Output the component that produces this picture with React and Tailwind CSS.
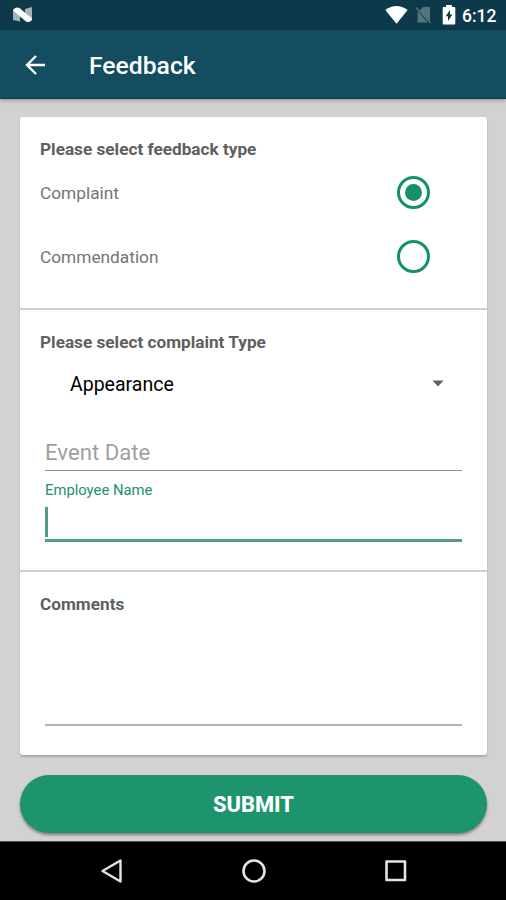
function StatusBar() {
  return (
    <div className="flex h-[30px] shrink-0 items-center bg-[#0d3a4a] pl-[13px] pr-[9px]">
      <svg width="20" height="16" viewBox="0 0 20 16">
        <path d="M0 2 7 6v8.500L0 13Z" fill="#a3b3b9" />
        <path d="M12 2 19 0v14l-7-4Z" fill="#a3b3b9" />
        <path d="M0 3.500Q2-.5 6.500 1L19 11.500Q17.500 16.500 13 14.500L0 3.500Z" fill="#fff" />
      </svg>
      <div className="ml-auto flex items-center">
        <svg width="23" height="18" viewBox="0 0 23 18">
          <path d="M.3 4Q11.500-3.800 22.700 4L11.500 17.800Z" fill="#fff" />
        </svg>
        <svg className="ml-[7px]" width="17" height="18" viewBox="0 0 17 18">
          <path d="M15 1v14.500L4.500 4.500 8 1ZM2.500 5v11.500H13Z" fill="#557681" />
          <path d="M.8 1.500 15.800 17" stroke="#557681" strokeWidth="1.400" />
        </svg>
        <svg className="ml-[10px]" width="14" height="20" viewBox="0 0 14 20">
          <path d="M4 0h6v2h2.300q1 0 1 1v15.500q0 1-1 1H1.700q-1 0-1-1V3q0-1 1-1H4Z" fill="#fff" />
          <path d="M8 5v4.500h2.500L6 16v-4.800H3.700Z" fill="#0d3a4a" />
        </svg>
        <span className="ml-1.5 w-[35px] whitespace-nowrap pt-[3px] text-[17.500px] font-medium leading-none text-white">6:12</span>
      </div>
    </div>
  );
}

function Radio({ label, checked }) {
  return (
    <div className="flex h-16 items-center justify-between pr-[57px]">
      <span className="pt-[3px] text-[17.300px] text-[#757575]">{label}</span>
      <span className="flex size-[33px] items-center justify-center rounded-full border-[3px] border-[#14906a]">
        {checked && <span className="size-[17px] rounded-full bg-[#14906a]" />}
      </span>
    </div>
  );
}

function Heading({ children }) {
  return <h2 className="text-[17.200px] font-bold leading-5 text-[#606060]">{children}</h2>;
}

export default function App() {
  return (
    <div className="flex h-[900px] w-[506px] flex-col overflow-hidden bg-[#d2d2d2] font-['Roboto',sans-serif]">
      <StatusBar />
      <header className="flex h-[69px] shrink-0 items-center border-b border-[#083d50] bg-[#144d5f] pl-[25px] shadow-[0_1px_4px_rgba(0,0,0,0.35)]">
        <svg className="mt-px" width="21" height="20" viewBox="0 0 21 20" fill="none" stroke="#fff" strokeWidth="2.400">
          <path d="M20 10H2M11 1 2 10l9 9" />
        </svg>
        <h1 className="ml-[43px] pt-1 text-[24.700px] font-medium leading-none text-white">Feedback</h1>
      </header>

      <main className="flex flex-1 flex-col px-5 pr-[19px] pt-[18px]">
        <div className="h-[638px] shrink-0 rounded-[3px] bg-white shadow-[0_2px_2px_rgba(0,0,0,0.2)]">
          <section className="h-[193px] border-b-2 border-[#d0d0d0] px-5 pr-0 pt-[22px]">
            <Heading>Please select feedback type</Heading>
            <div className="pt-px">
              <Radio label="Complaint" checked />
              <Radio label="Commendation" />
            </div>
          </section>

          <section className="h-[262px] border-b-2 border-[#d0d0d0] pl-5 pr-[25px] pt-[22px]">
            <Heading>Please select complaint Type</Heading>
            <div className="flex h-[62px] items-center justify-between pl-[30px] pr-[18px]">
              <span className="pt-[3px] text-[19.500px] text-black">Appearance</span>
              <svg width="12" height="7" viewBox="0 0 12 7">
                <path d="M.5.500h11L6 6.500Z" fill="#606060" />
              </svg>
            </div>
            <div className="ml-[5px] flex h-[57px] items-end border-b border-[#909090] pb-1">
              <span className="text-[22.200px] leading-[27px] text-[#a0a0a0]">Event Date</span>
            </div>
            <div className="ml-[5px] h-[71px] border-b-[3px] border-[#529d7f] pt-[9px]">
              <div className="text-[14.800px] leading-5 text-[#219169]">Employee Name</div>
              <div className="mt-[7px] h-[30px] w-[3px] bg-[#529d7f]" />
            </div>
          </section>

          <section className="pl-5 pr-[25px] pt-[22px]">
            <Heading>Comments</Heading>
            <div className="ml-[5px] h-[112px] border-b-2 border-[#b5b5b5]" />
          </section>
        </div>

        <button className="mt-5 h-[58px] shrink-0 rounded-full bg-[#1d946e] pt-[3px] text-[21.800px] font-extrabold text-white shadow-[0_2px_3px_rgba(0,0,0,0.4)]">
          SUBMIT
        </button>
      </main>

      <nav className="flex h-[59px] shrink-0 items-center border-t border-[#555] bg-black pl-[101px]">
        <svg width="22" height="24" viewBox="0 0 22 24" fill="none" stroke="#e4e4e4" strokeWidth="2.400" strokeLinejoin="round">
          <path d="M19.500 1.500v21L1.500 12Z" />
        </svg>
        <svg className="ml-[119px]" width="24" height="24" viewBox="0 0 24 24" fill="none" stroke="#e4e4e4" strokeWidth="2.600">
          <circle cx="12" cy="12" r="10.500" />
        </svg>
        <svg className="ml-[119px]" width="22" height="22" viewBox="0 0 22 22" fill="none" stroke="#e4e4e4" strokeWidth="2.600" strokeLinejoin="round">
          <path d="M1.500 1.500h18.500v18.500H1.500Z" />
        </svg>
      </nav>
    </div>
  );
}
